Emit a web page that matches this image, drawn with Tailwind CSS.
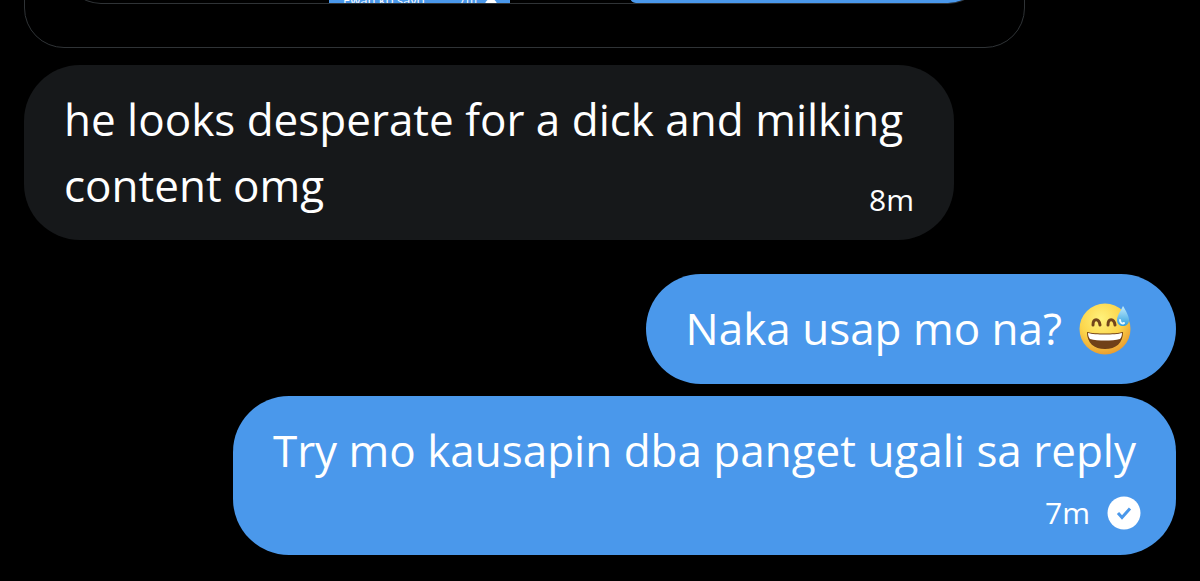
<!DOCTYPE html>
<html lang="tl">
<head>
  <meta charset="UTF-8" />
  <meta name="viewport" content="width=device-width, initial-scale=1.0" />
  <title>Messages</title>
  <script src="https://cdn.jsdelivr.net/npm/@tailwindcss/browser@4"></script>
</head>
<body class="bg-black text-white font-['Open_Sans',sans-serif] min-h-screen overflow-x-hidden">

  <main class="flex flex-col px-6">

    <!-- Shared screenshot, scrolled mostly out of view -->
    <section class="h-12 w-full max-w-[1001px] overflow-hidden flex flex-col justify-end">
      <div class="shrink-0 h-40 px-10 pb-[43px] border border-[#2f3336] rounded-[40px]">
        <div class="h-full overflow-hidden flex items-end border-b border-[#2f3336] rounded-[36px]">
          <div class="ml-[264px] w-[181px] h-8 shrink-0 bg-[#4a98eb] flex items-end pl-[14px] pr-[13px] text-[13px] leading-[6px]">
            <p class="flex-1 whitespace-nowrap">Ewan ko sayo</p>
            <span class="text-[12px] mr-2">7m</span>
            <span class="w-3 h-3 -mb-2 rounded-full bg-white"></span>
          </div>
          <div class="ml-[120px] flex-1 h-20 bg-[#4a98eb] rounded-bl-[6px]"></div>
        </div>
      </div>
    </section>

    <section class="flex flex-col pt-[17px] text-[44px] leading-[66px]">
      <article class="relative self-start w-full max-w-[930px] bg-[#16181a] rounded-[56px] px-10 pt-[21px] pb-[22px]">
        <p>he looks desperate for a dick and milking content omg</p>
        <time class="absolute right-10 bottom-5 text-[30px] leading-10">8m</time>
      </article>

      <article class="self-end mt-[34px] bg-[#4a98eb] rounded-[56px] pl-10 pr-[42px] pt-[21px] pb-[23px]">
        <p class="flex items-center gap-4">
          Naka usap mo na?
          <svg class="w-14 h-14" viewBox="0 0 56 56" role="img" aria-label="grinning face with sweat">
            <defs>
              <radialGradient id="face" cx="0.42" cy="0.3" r="0.75">
                <stop offset="0" stop-color="#fff27c" />
                <stop offset="0.55" stop-color="#fcd54b" />
                <stop offset="1" stop-color="#e8962b" />
              </radialGradient>
              <linearGradient id="drop" x1="0" y1="0" x2="0" y2="1">
                <stop offset="0" stop-color="#c4ecfc" />
                <stop offset="1" stop-color="#2f9fe0" />
              </linearGradient>
            </defs>
            <circle cx="27" cy="29" r="25.500" fill="url(#face)" />
            <path d="M15 25C15 18 21 18 22 25M30 25C30 18 36 18 37 25" fill="none" stroke="#73451b" stroke-width="3" stroke-linecap="round" />
            <path d="M9 32C17 34 37 34 45 32C45 43 38 49 27 49S9 43 9 32Z" fill="#704018" />
            <path d="M10 33C17 35 37 35 44 33C44 36 43 38 42 39C34 41 20 41 12 39C11 38 10 36 10 33Z" fill="#fff" />
            <path d="M45 6C42 12 39 16 39 20C39 24 42 26 45 26S51 24 51 20C51 16 48 11 45 6Z" fill="url(#drop)" />
            <path d="M42 20C42 23 44 24 46 23" fill="none" stroke="#e8f9ff" stroke-width="2" stroke-linecap="round" />
          </svg>
        </p>
      </article>

      <article class="self-end mt-3 bg-[#4a98eb] rounded-[56px] px-10 pt-[21px] pb-[22px]">
        <p>Try mo kausapin dba panget ugali sa reply</p>
        <div class="flex items-center justify-end gap-4 mt-[10px] -mr-[6px] text-[30px] leading-10">
          <time>7m</time>
          <svg class="w-9 h-9" viewBox="0 0 36 36" role="img" aria-label="Sent">
            <circle cx="18" cy="18" r="16.500" fill="#fff" />
            <path d="M12 18L16 22.500L24 13.500" fill="none" stroke="#4a98eb" stroke-width="3" />
          </svg>
        </div>
      </article>
    </section>

  </main>
</body>
</html>
